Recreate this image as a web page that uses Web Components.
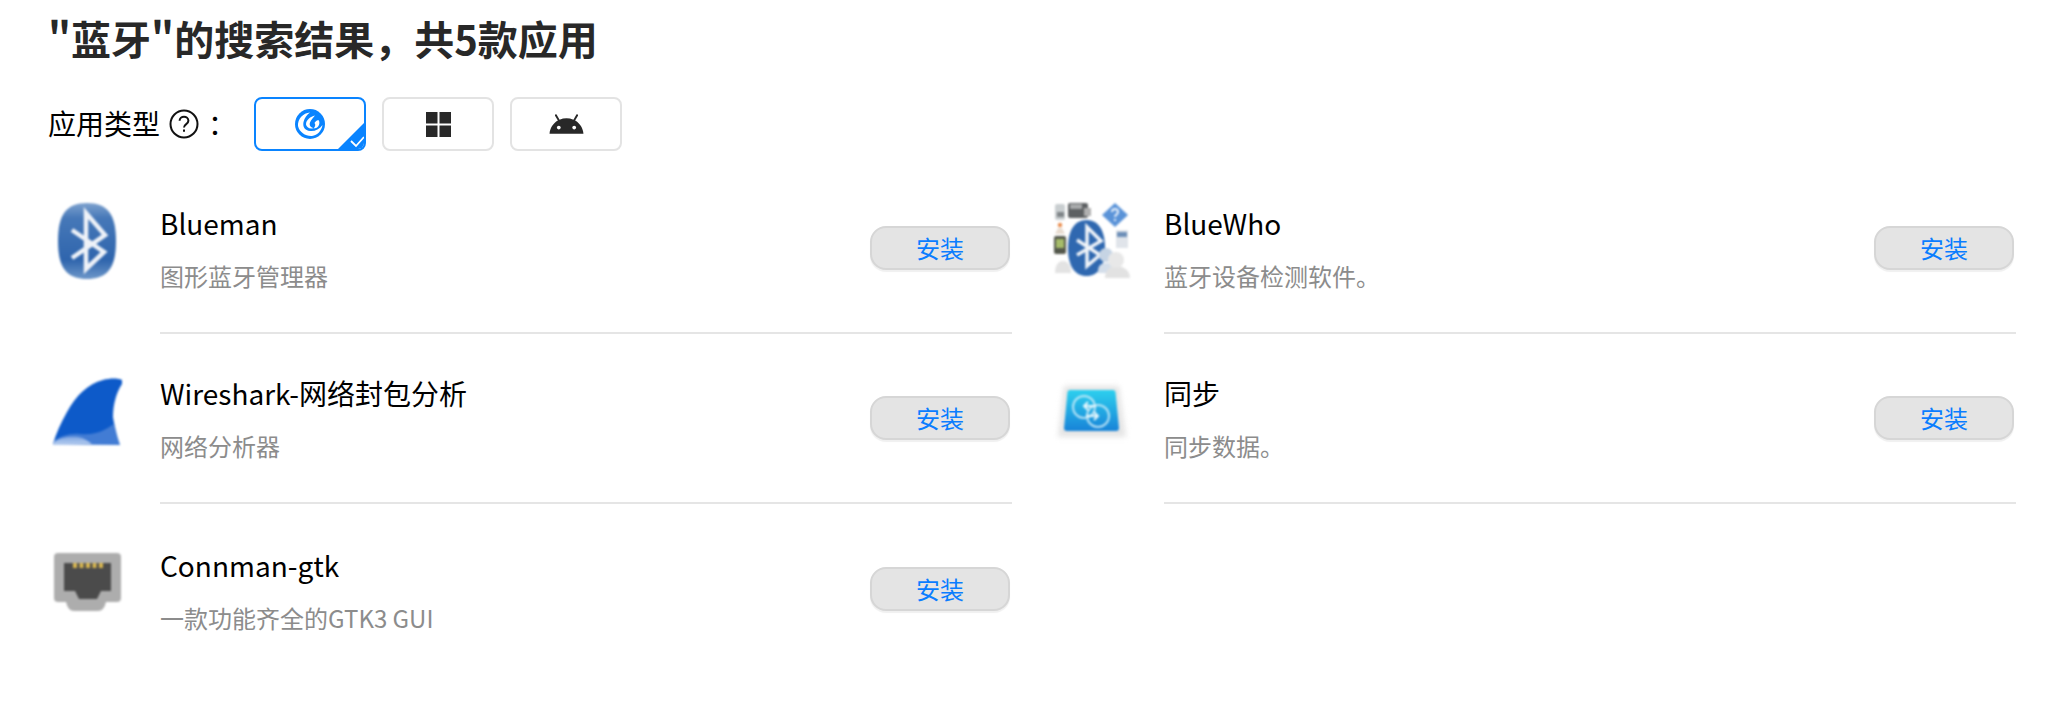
<!DOCTYPE html>
<html lang="zh">
<head>
<meta charset="utf-8">
<title>搜索结果</title>
<style>
  html, body { margin: 0; background: #fff; }
  body { font-family: "Noto Sans CJK SC", "Noto Sans", sans-serif; }
</style>
</head>
<body>
<search-page>
  <span slot="title">"蓝牙"的搜索结果，共5款应用</span>
  <type-filter slot="filter"></type-filter>
  <app-row name="Blueman" desc="图形蓝牙管理器" icon="blueman"></app-row>
  <app-row name="BlueWho" desc="蓝牙设备检测软件。" icon="bluewho"></app-row>
  <app-row name="Wireshark-网络封包分析" desc="网络分析器" icon="wireshark"></app-row>
  <app-row name="同步" desc="同步数据。" icon="sync"></app-row>
  <app-row name="Connman-gtk" desc="一款功能齐全的GTK3 GUI" icon="connman" last></app-row>
</search-page>

<script>
const ICONS = {
  blueman: `
    <defs><linearGradient id="bm" x1="0" y1="0" x2="0" y2="1">
      <stop offset="0" stop-color="#7ea2cf"/><stop offset=".2" stop-color="#4678b8"/>
      <stop offset=".75" stop-color="#2f65ad"/><stop offset="1" stop-color="#6d97c9"/>
    </linearGradient></defs>
    <path d="M39 2 C60 2 68 14 68 40 C68 66 60 78 39 78 C18 78 10 66 10 40 C10 14 18 2 39 2Z" fill="url(#bm)"/>
    <path d="M24 29 L56 51 L38 68 L38 12 L57 34 L24 57" fill="none" stroke="#eef2f8" stroke-width="4.5"/>`,
  wireshark: `
    <defs><linearGradient id="ws" x1="0" y1="0" x2="0" y2="1">
      <stop offset="0" stop-color="#7fa6e2"/><stop offset="1" stop-color="#b9cff0"/>
    </linearGradient></defs>
    <path d="M74 9 C70 7 62 7 55 9 C40 13 28 24 19 41 C13 52 8 62 5 73 L72 74 C70 68 67 58 65 46 C65 34 68 22 74 13Z" fill="#0d5ac9"/>
    <path d="M6 70 C12 65 22 62 32 63 C42 64 50 62 56 59 C60 57 63 55 66 53 C67 60 70 68 72 74 L5 74Z" fill="#6f99dd" opacity=".55"/>
    <path d="M6 71 C12 66 22 65 30 66 C36 67 40 70 44 73 L5 74Z" fill="url(#ws)"/>`,
  connman: `
    <path d="M10 12 H69 Q73 12 73 16 V57 Q73 61 69 61 H58 Q56 70 50 70 H26 Q20 70 18 61 H10 Q6 61 6 57 V16 Q6 12 10 12Z" fill="#adadad"/>
    <path d="M16 22 H63 V50 H53 L49 58 H31 L27 50 H16Z" fill="#4b4b4b"/>
    <g fill="#d8b64f"><rect x="25" y="22" width="4" height="5"/><rect x="31.5" y="22" width="4" height="5"/><rect x="38" y="22" width="4" height="5"/><rect x="44.5" y="22" width="4" height="5"/><rect x="51" y="22" width="4" height="5"/></g>`,
  sync: `
    <defs><linearGradient id="sy" x1="0" y1="0" x2="0" y2="1">
      <stop offset="0" stop-color="#2dd0ee"/><stop offset="1" stop-color="#1883d8"/>
    </linearGradient>
    <filter id="soft" x="-20%" y="-20%" width="140%" height="140%"><feGaussianBlur stdDeviation="2.5"/></filter></defs>
    <path d="M12 15 H67 L74 66 H6Z" fill="#dcdcdc" opacity=".75" filter="url(#soft)"/>
    <path d="M18 19 H61 Q63 19 63.5 21 L67 57 Q67 60 64 60 H15 Q12 60 12 57 L15.5 21 Q16 19 18 19Z" fill="url(#sy)"/>
    <g fill="none" stroke="#cfeefa" stroke-width="2" opacity=".85">
      <circle cx="32" cy="36" r="11"/><circle cx="46" cy="45" r="11"/>
    </g>
    <g fill="none" stroke="#e8f8fd" stroke-width="2">
      <path d="M44 35 H32 M36 31 L32 35 L36 39 M34 45 H46 M42 41 L46 45 L42 49"/>
    </g>`,
  bluewho: `
    <rect x="3" y="3" width="10" height="16" rx="2" fill="#c9ced0"/><rect x="5" y="11" width="7" height="5" fill="#7f8588"/>
    <rect x="16" y="2" width="20" height="15" rx="2" fill="#5d6062"/><rect x="18" y="3" width="12" height="5" fill="#a8aaab"/><rect x="32" y="7" width="7" height="8" fill="#b0b0b0"/>
    <circle cx="8" cy="24" r="2.2" fill="#e88a4a"/><path d="M3 33 L6 27 H10 L13 33Z" fill="#e8dcd0"/>
    <rect x="2" y="35" width="12" height="18" rx="2" fill="#54584c"/><rect x="4" y="38" width="8" height="9" fill="#a6bc6a"/>
    <path d="M3 72 C3 63 7 60 11 60 C15 60 19 63 19 72Z" fill="#e3e3e3"/>
    <path d="M63 2 L76 14 L63 26 L50 14Z" fill="#5a93d8"/>
    <path d="M60 11 C60 7 66 7 66 11 C66 13.5 63 13.5 63 16 M63 18 V20" fill="none" stroke="#eaf2fb" stroke-width="2"/>
    <rect x="64" y="29" width="12" height="18" fill="#e0e4ea"/><rect x="65" y="31" width="10" height="5" fill="#6d8fb8"/>
    <path d="M34.5 19 C47 19 53 30 53 47 C53 64 47 75 34.5 75 C22 75 16 64 16 47 C16 30 22 19 34.5 19Z" fill="#2f68b0"/>
    <path d="M25 39 L48 54 L35 65 L35 26 L49 40 L25 54" fill="none" stroke="#f0f4f9" stroke-width="3.5"/>
    <circle cx="54" cy="54" r="7" fill="#c6d4e4"/><path d="M46 70 C46 64 50 62 54 62 H60 V72 H46Z" fill="#d4deea"/>
    <path d="M53 77 C53 69 58 65 64 65 C71 65 78 69 78 77Z" fill="#e2e2e2"/>
    <circle cx="64" cy="59" r="8" fill="#e8e8e8"/>`
};

class AppIcon extends HTMLElement {
  connectedCallback() {
    this.attachShadow({ mode: 'open' });
    this.shadowRoot.innerHTML = `
      <style>
        :host { display: block; width: 80px; height: 80px; }
        svg { display: block; filter: blur(.8px); }
      </style>
      <svg width="80" height="80" viewBox="0 0 80 80">${ICONS[this.getAttribute('kind')] || ''}</svg>
    `;
  }
}
customElements.define('app-icon', AppIcon);

class InstallButton extends HTMLElement {
  connectedCallback() {
    this.attachShadow({ mode: 'open' });
    this.shadowRoot.innerHTML = `
      <style>
        :host { display: block; flex: none; margin-right: 2px; }
        button {
          display: block; width: 140px; height: 44px; padding: 0; box-sizing: border-box;
          font: 400 24px/40px "Noto Sans CJK SC", sans-serif;
          color: #0a7dff; background: #e4e4e4;
          border: 2px solid #d6d6d6; border-radius: 16px;
          box-shadow: 0 2px 1px #f0f0f0;
        }
      </style>
      <button><slot></slot></button>
    `;
  }
}
customElements.define('install-button', InstallButton);

class AppRow extends HTMLElement {
  connectedCallback() {
    this.attachShadow({ mode: 'open' });
    const last = this.hasAttribute('last');
    this.shadowRoot.innerHTML = `
      <style>
        :host { display: flex; height: 170px; }
        app-icon { flex: none; margin: 37px 32px 0 0; }
        .body {
          flex: 1; display: flex; align-items: center; justify-content: space-between;
          box-sizing: border-box; height: 170px; padding-top: ${last ? 2 : 0}px;
          border-bottom: 2px solid ${last ? 'transparent' : '#e5e5e5'};
        }
        .name { font-size: 28px; line-height: 40px; color: #000; }
        .desc { font-size: 24px; line-height: 36px; color: #8c8c8c; margin-top: 15px; }
        .text { align-self: flex-start; padding-top: 39px; }
      </style>
      <app-icon kind="${this.getAttribute('icon')}"></app-icon>
      <div class="body">
        <div class="text">
          <div class="name">${this.getAttribute('name')}</div>
          <div class="desc">${this.getAttribute('desc')}</div>
        </div>
        <install-button>安装</install-button>
      </div>
    `;
  }
}
customElements.define('app-row', AppRow);

class TypeFilter extends HTMLElement {
  connectedCallback() {
    this.attachShadow({ mode: 'open' });
    this.shadowRoot.innerHTML = `
      <style>
        :host { display: flex; align-items: flex-start; height: 54px; color: #000; }
        .label { font-size: 28px; line-height: 40px; margin-top: 6px; }
        .help { display: block; margin: 12px 9px 0 9px; }
        .colon { width: 46px; font-size: 28px; line-height: 40px; margin-top: 6px; }
        .types { display: flex; gap: 16px; }
        .type {
          position: relative; box-sizing: border-box; width: 112px; height: 54px;
          border: 2px solid #e3e3e3; border-radius: 8px;
          display: flex; align-items: center; justify-content: center; overflow: hidden;
        }
        .type.on { border-color: #0a84ff; }
        .tick { position: absolute; right: -2px; bottom: -2px; }
      </style>
      <span class="label">应用类型</span>
      <svg class="help" width="30" height="30" viewBox="0 0 30 30" fill="none" stroke="#111" stroke-width="2">
        <circle cx="15" cy="15" r="13.5"/>
        <path d="M10.6 11.8 C10.6 6.4 19.4 6.4 19.4 11.8 C19.4 15.2 15 15 15 18.6"/>
        <path d="M15 20.4 V22.8"/>
      </svg>
      <span class="colon">：</span>
      <div class="types">
        <div class="type on">
          <svg width="30" height="30" viewBox="0 0 30 30">
            <circle cx="15" cy="15" r="15" fill="#0a84ff"/>
            <path d="M15 3.5 C8 4 2.5 10 3 17 C4.5 23.5 11 27.5 17 27 C22.5 26 26.5 22 27.5 16 C24 20.5 20 22.5 15 22 C10 21.5 7.5 18 8.5 13 C9.5 9 12 5.5 15 3.5Z" fill="#fff"/>
            <path d="M20 6.5 C15.5 7.5 11 11 11 15.5 C11.5 18.5 15 20.5 18.5 19 C15.5 18.5 14 16 15 13.5 C16 10.5 18.5 8.5 20 6.5Z" fill="#fff"/>
            <path d="M24 11.5 C22 10.5 20.5 12.5 19.5 14 C21 15.5 20 18 18.5 19.5 C22.5 19.5 25.5 16 24 11.5Z" fill="#fff"/>
          </svg>
          <svg class="tick" width="30" height="30" viewBox="0 0 30 30">
            <path d="M30 0 V24 Q30 30 24 30 H0Z" fill="#0a84ff"/>
            <path d="M15 20 L20 25 L28 16" fill="none" stroke="#fff" stroke-width="1.8"/>
          </svg>
        </div>
        <div class="type">
          <svg width="25" height="25" viewBox="0 0 25 25" fill="#282828">
            <rect width="11.5" height="11.5"/><rect x="13.5" width="11.5" height="11.5"/>
            <rect y="13.5" width="11.5" height="11.5"/><rect x="13.5" y="13.5" width="11.5" height="11.5"/>
          </svg>
        </div>
        <div class="type">
          <svg width="37" height="37" viewBox="0 0 24 24" fill="#282828">
            <path d="M17.6 9.48l1.84-3.18c.16-.31.04-.69-.26-.85-.29-.15-.65-.06-.83.22l-1.88 3.24c-2.86-1.21-6.08-1.21-8.94 0L5.65 5.67c-.19-.29-.58-.38-.87-.2-.28.18-.37.54-.22.83L6.4 9.48C3.3 11.25 1.28 14.44 1 18h22c-.28-3.56-2.3-6.75-5.4-8.52zM7 15.25c-.69 0-1.25-.56-1.25-1.25s.56-1.25 1.25-1.25 1.25.56 1.25 1.25-.56 1.25-1.25 1.25zm10 0c-.69 0-1.25-.56-1.25-1.25s.56-1.25 1.25-1.25 1.25.56 1.25 1.25-.56 1.25-1.25 1.25z"/>
          </svg>
        </div>
      </div>
    `;
  }
}
customElements.define('type-filter', TypeFilter);

class SearchPage extends HTMLElement {
  connectedCallback() {
    this.attachShadow({ mode: 'open' });
    this.shadowRoot.innerHTML = `
      <style>
        :host { display: block; box-sizing: border-box; height: 718px; padding: 8px 34px 0 48px; }
        h1 { margin: 0; font-size: 40px; line-height: 60px; font-weight: 700; color: #282828; }
        .filter { margin-top: 29px; }
        .grid { display: grid; grid-template-columns: 964px 964px; column-gap: 40px; margin-top: 13px; }
      </style>
      <h1><slot name="title"></slot></h1>
      <div class="filter"><slot name="filter"></slot></div>
      <div class="grid"><slot></slot></div>
    `;
  }
}
customElements.define('search-page', SearchPage);
</script>
</body>
</html>
